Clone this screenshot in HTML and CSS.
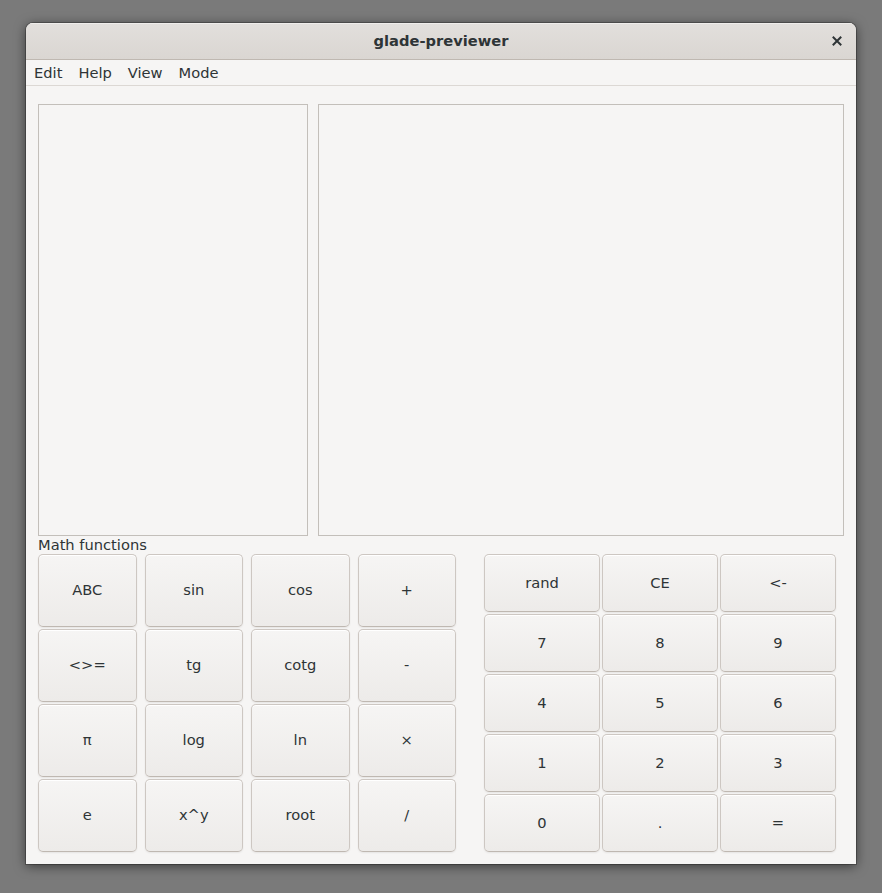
FILE: index.html
```html
<!DOCTYPE html>
<html>
<head>
<meta charset="utf-8">
<link rel="stylesheet" href="styles.css">
</head>
<body>
<div class="window">
  <div class="titlebar">
    <span class="title">glade-previewer</span>
    <span class="close"><svg width="12" height="12" viewBox="0 0 12 12"><path d="M2.5 2.5L9.5 9.5M9.5 2.5L2.5 9.5" stroke="#2e3436" stroke-width="2" stroke-linecap="square"/></svg></span>
  </div>
  <div class="menubar">
    <span class="menu">Edit</span>
    <span class="menu">Help</span>
    <span class="menu">View</span>
    <span class="menu">Mode</span>
  </div>
  <div class="content">
    <div class="panels">
      <div class="panel panel-left"></div>
      <div class="panel panel-right"></div>
    </div>
    <div class="label">Math functions</div>
    <div class="keypads">
      <div class="grid-fn">
        <button class="btn">ABC</button>
        <button class="btn">sin</button>
        <button class="btn">cos</button>
        <button class="btn">+</button>
        <button class="btn">&lt;&gt;=</button>
        <button class="btn">tg</button>
        <button class="btn">cotg</button>
        <button class="btn">-</button>
        <button class="btn">π</button>
        <button class="btn">log</button>
        <button class="btn">ln</button>
        <button class="btn">×</button>
        <button class="btn">e</button>
        <button class="btn">x^y</button>
        <button class="btn">root</button>
        <button class="btn">/</button>
      </div>
      <div class="grid-num">
        <button class="btn">rand</button>
        <button class="btn">CE</button>
        <button class="btn">&lt;-</button>
        <button class="btn">7</button>
        <button class="btn">8</button>
        <button class="btn">9</button>
        <button class="btn">4</button>
        <button class="btn">5</button>
        <button class="btn">6</button>
        <button class="btn">1</button>
        <button class="btn">2</button>
        <button class="btn">3</button>
        <button class="btn">0</button>
        <button class="btn">.</button>
        <button class="btn">=</button>
      </div>
    </div>
  </div>
</div>
</body>
</html>
```

FILE: styles.css
```css
html, body {
  margin: 0;
  padding: 0;
}
body {
  background: #7a7a7a;
  width: 882px;
  height: 893px;
  overflow: hidden;
  font-family: "DejaVu Sans", sans-serif;
  color: #2e3436;
}
.window {
  margin: 23px 0 0 26px;
  width: 830px;
  height: 841px;
  background: #f6f5f4;
  border-radius: 7px 7px 0 0;
  box-shadow: 0 2px 12px rgba(0,0,0,0.55), 0 0 0 1px rgba(0,0,0,0.25);
  display: flex;
  flex-direction: column;
  overflow: hidden;
}
.titlebar {
  height: 37px;
  box-sizing: border-box;
  padding-bottom: 2px;
  flex: none;
  border-bottom: 1px solid #bfb8b1;
  background: linear-gradient(#e2dfdc, #dad6d2);
  box-shadow: inset 0 1px 0 #efedeb;
  display: flex;
  align-items: center;
  justify-content: center;
  position: relative;
}
.title {
  font-weight: bold;
  font-size: 14.667px;
  color: #2e3436;
}
.close {
  position: absolute;
  right: 13px;
  top: 12px;
  width: 12px;
  height: 12px;
  display: flex;
}
.menubar {
  height: 25px;
  flex: none;
  border-bottom: 1px solid #dcd8d4;
  display: flex;
  align-items: center;
}
.menu {
  font-size: 14.667px;
  padding: 0 8px;
  line-height: 25px;
  color: #2e3436;
}
.content {
  padding: 18px 12px 12px 12px;
  display: flex;
  flex-direction: column;
}
.panels {
  display: flex;
  gap: 10px;
  height: 432px;
}
.panel {
  border: 1px solid #c3bfba;
  box-sizing: border-box;
  height: 432px;
}
.panel-left {
  width: 270px;
}
.panel-right {
  flex: 1;
}
.label {
  font-size: 14.667px;
  line-height: 18px;
  height: 18px;
  color: #2e3436;
}
.keypads {
  display: flex;
  gap: 28px;
}
.grid-fn {
  width: 418px;
  display: grid;
  grid-template-columns: repeat(4, 1fr);
  grid-template-rows: repeat(4, 73px);
  column-gap: 8px;
  row-gap: 2px;
}
.grid-num {
  width: 352px;
  display: grid;
  grid-template-columns: repeat(3, 1fr);
  grid-template-rows: repeat(5, 58px);
  gap: 2px;
}
.btn {
  font-family: "DejaVu Sans", sans-serif;
  font-size: 14.667px;
  color: #2e3436;
  border: 1px solid #cdc7c2;
  border-bottom-color: #bfb8b1;
  border-radius: 5px;
  background: linear-gradient(#f6f5f4, #edebe9);
  box-shadow: inset 0 1px #ffffff, 0 1px 2px rgba(0,0,0,0.07);
  padding: 0 0 2px 0;
  margin: 0;
  display: flex;
  align-items: center;
  justify-content: center;
}
```
